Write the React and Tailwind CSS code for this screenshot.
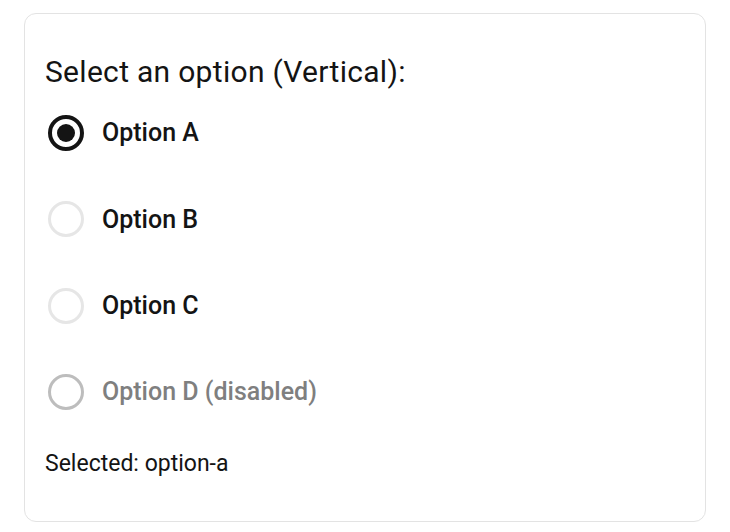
const options = [
  { id: 'option-a', label: 'Option A', checked: true },
  { id: 'option-b', label: 'Option B' },
  { id: 'option-c', label: 'Option C' },
  { id: 'option-d', label: 'Option D (disabled)', disabled: true },
];

function Radio({ checked, disabled }) {
  if (checked) {
    return (
      <span className="flex h-[36px] w-[36px] shrink-0 items-center justify-center rounded-full border-[4px] border-[#141414]">
        <span className="h-[18px] w-[18px] rounded-full bg-[#141414]" />
      </span>
    );
  }
  return (
    <span
      className={
        disabled
          ? 'h-[36px] w-[36px] shrink-0 rounded-full border-[3.5px] border-[#bdbdbd]'
          : 'h-[36px] w-[36px] shrink-0 rounded-full border-[3.5px] border-[#e6e6e6]'
      }
    />
  );
}

export default function App() {
  return (
    <div className="min-h-[532px] bg-white px-6 pt-[13px] font-['Roboto',sans-serif]">
      <div className="h-[509px] rounded-xl border border-[#e3e3e3] px-5 pt-[40px]">
        <h2 className="m-0 text-[30px] leading-[36px] tracking-[0.3px] text-[#141414]">
          Select an option (Vertical):
        </h2>
        <div className="flex flex-col">
          {options.map((o) => (
            <label key={o.id} className="flex h-[86.3px] items-center gap-[18px] pl-[3px]">
              <Radio checked={o.checked} disabled={o.disabled} />
              <span
                className={
                  o.disabled
                    ? 'text-[25px] font-medium text-[#7f7f7f]'
                    : 'text-[25px] font-medium text-[#141414]'
                }
              >
                {o.label}
              </span>
            </label>
          ))}
        </div>
        <p className="m-0 mt-[15px] text-[23px] leading-[28px] text-[#141414]">Selected: option-a</p>
      </div>
    </div>
  );
}
